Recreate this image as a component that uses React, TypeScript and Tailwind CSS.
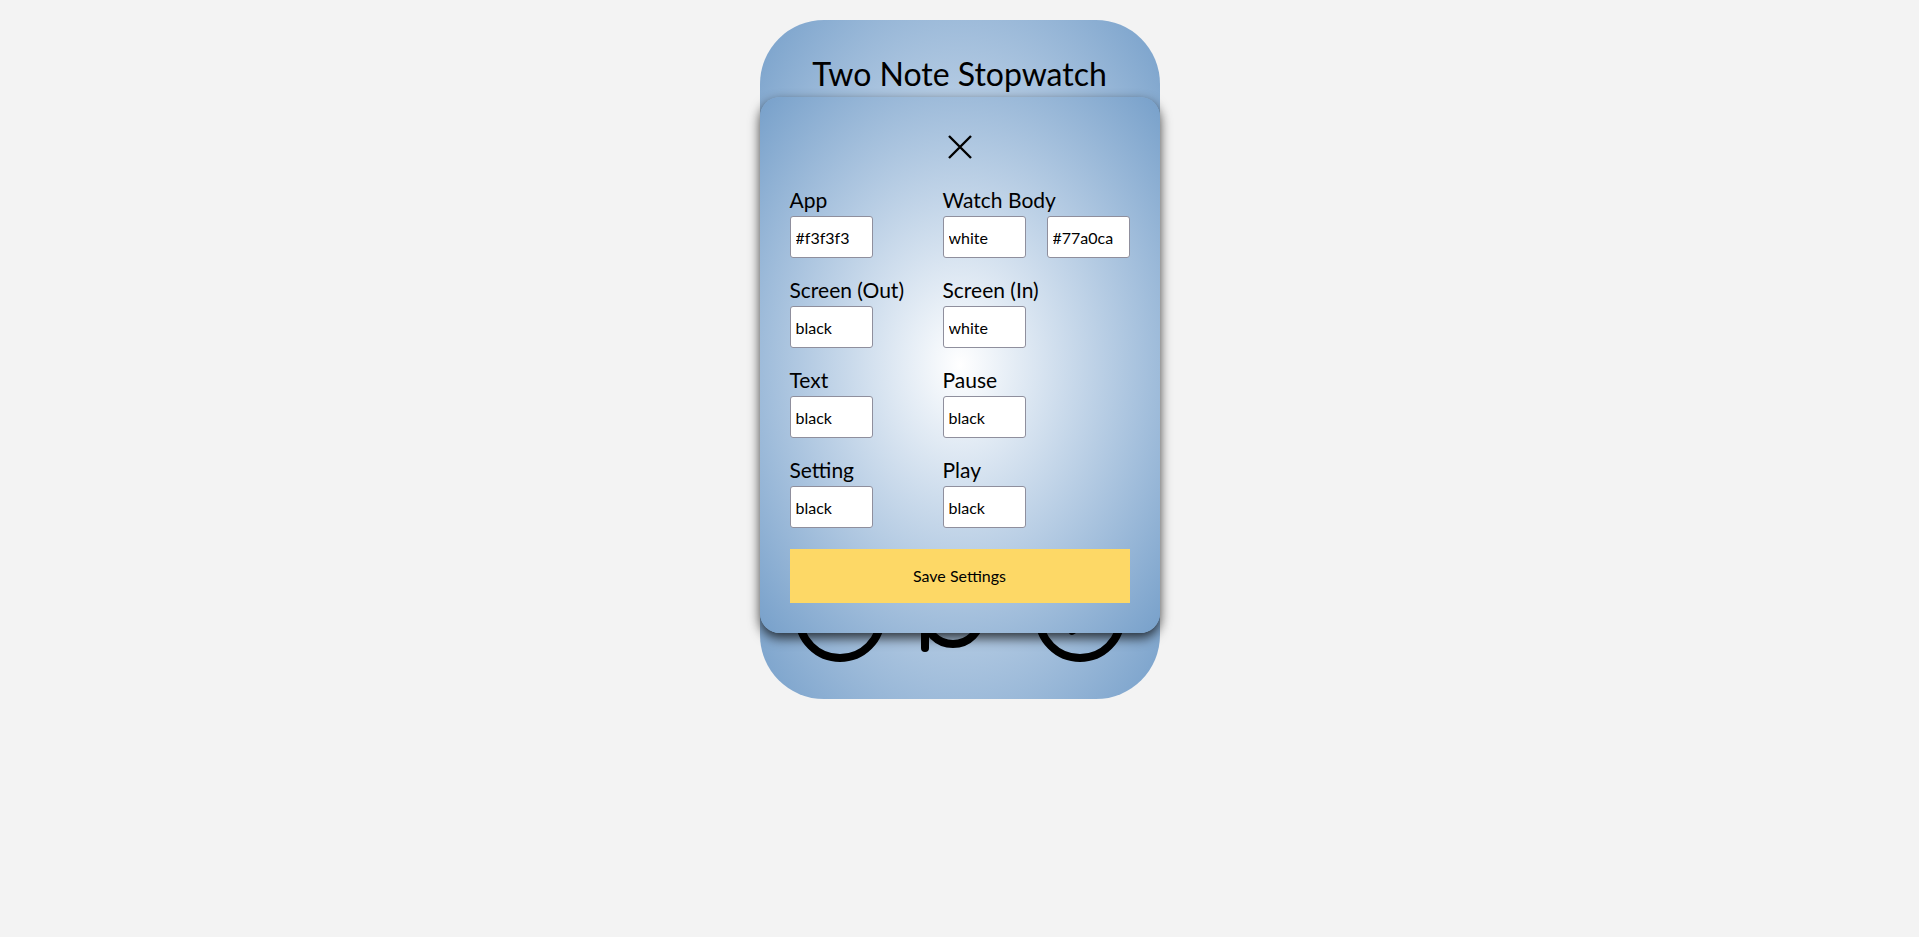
const FONT = "font-['Lato','Open_Sans',sans-serif]";

type Field = { label: string; values: string[] };

const ROWS: [Field, Field][] = [
  [
    { label: "App", values: ["#f3f3f3"] },
    { label: "Watch Body", values: ["white", "#77a0ca"] },
  ],
  [
    { label: "Screen (Out)", values: ["black"] },
    { label: "Screen (In)", values: ["white"] },
  ],
  [
    { label: "Text", values: ["black"] },
    { label: "Pause", values: ["black"] },
  ],
  [
    { label: "Setting", values: ["black"] },
    { label: "Play", values: ["black"] },
  ],
];

function ColorField({ field }: { field: Field }) {
  return (
    <div className="flex flex-col gap-[4px]">
      <label className="text-[21px] leading-[24px] text-black whitespace-nowrap">
        {field.label}
      </label>
      <div className="flex gap-[21px]">
        {field.values.map((v) => (
          <input
            key={v}
            defaultValue={v}
            className="w-[83px] h-[42px] bg-white border border-[#8f8f9d] rounded-[3px] pl-[5px] text-[16px] text-black outline-none"
          />
        ))}
      </div>
    </div>
  );
}

function Settings() {
  return (
    <div className="absolute left-0 top-[77px] w-[400px] h-[536px] rounded-[20px] bg-radial from-white to-[#77a0ca] shadow-[0_5px_12px_rgba(0,0,0,0.75)] px-[30px] pt-[38px] pb-[29px] flex flex-col">
      <button className="self-center w-[24px] h-[24px]">
        <svg viewBox="0 0 24 24" width="24" height="24">
          <path d="M1 1L23 23M23 1L1 23" stroke="black" strokeWidth="2.4" />
        </svg>
      </button>

      <div className="mt-[29px] flex flex-col gap-[20px]">
        {ROWS.map(([a, b]) => (
          <div key={a.label} className="grid grid-cols-[153px_1fr]">
            <ColorField field={a} />
            <ColorField field={b} />
          </div>
        ))}
      </div>

      <button className="mt-[21px] w-full h-[54px] bg-[#fdd866] text-[16px] text-black">
        Save Settings
      </button>
    </div>
  );
}

export default function App() {
  return (
    <div className={`min-h-screen bg-[#f3f3f3] flex justify-center pt-[20px] ${FONT}`}>
      <div className="relative w-[400px] h-[679px] rounded-[64px] bg-radial from-white to-[#77a0ca] flex flex-col">
        <h1 className="pt-[30px] text-center text-[32px] leading-[48px] text-black">
          Two Note Stopwatch
        </h1>

        {/* controls, mostly under the settings panel */}
        <div className="mt-auto mb-[37px] px-[35px] flex items-end justify-between">
          <svg width="90" height="90" viewBox="0 0 90 90">
            <circle cx="45" cy="45" r="41" fill="none" stroke="black" strokeWidth="8" />
          </svg>
          <svg width="76" height="90" viewBox="0 0 76 90" className="-ml-[9px]">
            <path d="M8 10V76" stroke="black" strokeWidth="8" strokeLinecap="round" fill="none" />
            <path d="M8 44A28 28 0 0 0 64 44" stroke="black" strokeWidth="8" fill="none" />
          </svg>
          <svg width="90" height="90" viewBox="0 0 90 90">
            <circle cx="45" cy="45" r="41" fill="none" stroke="black" strokeWidth="8" />
            <path d="M37 24L37 60L66 42Z" fill="black" stroke="black" strokeWidth="6" strokeLinejoin="round" />
          </svg>
        </div>

        <Settings />
      </div>
    </div>
  );
}
